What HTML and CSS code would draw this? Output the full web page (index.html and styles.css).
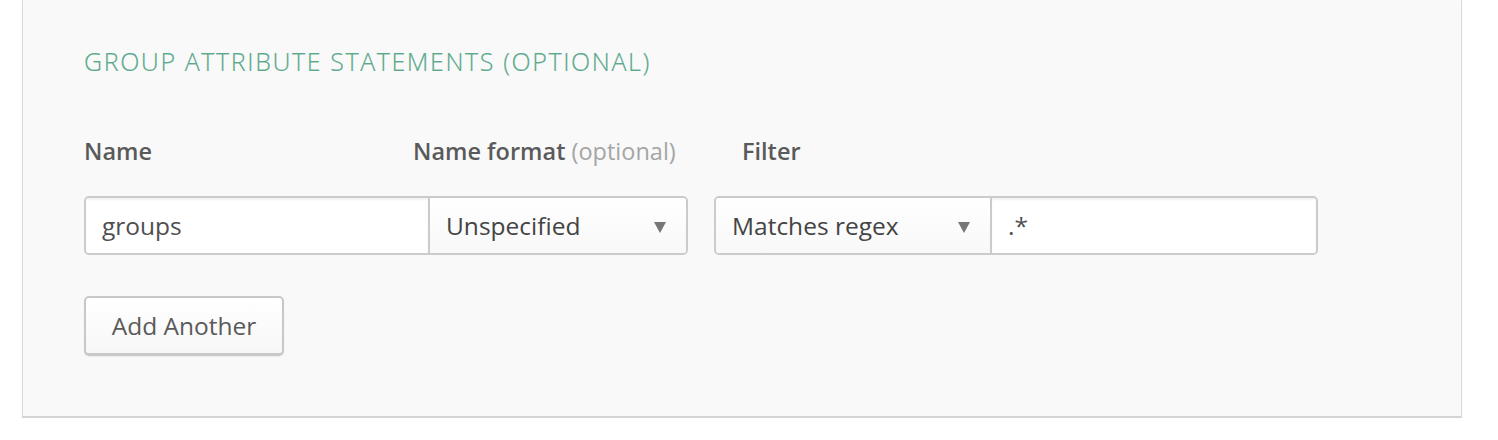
FILE: index.html
```html
<!DOCTYPE html>
<html>
<head>
<meta charset="utf-8">
<link rel="stylesheet" href="styles.css">
</head>
<body>
<div class="panel">
  <h2 class="title">GROUP ATTRIBUTE STATEMENTS (OPTIONAL)</h2>
  <div class="labels">
    <div class="lbl lbl-name">Name</div>
    <div class="lbl lbl-format">Name format <span class="opt">(optional)</span></div>
    <div class="lbl lbl-filter">Filter</div>
  </div>
  <div class="fields">
    <div class="group">
      <div class="input name-input">groups</div>
      <div class="select format-select">Unspecified<span class="caret"></span></div>
    </div>
    <div class="group">
      <div class="select filter-select">Matches regex<span class="caret"></span></div>
      <div class="input regex-input">.*</div>
    </div>
  </div>
  <button class="btn">Add Another</button>
</div>
</body>
</html>
```
FILE: styles.css
```css
html, body {
  margin: 0;
  padding: 0;
  background: #ffffff;
}
body {
  font-family: "Open Sans", Lato, "Liberation Sans", sans-serif;
  color: #5c5c5c;
}
.panel {
  margin-left: 22px;
  width: 1440px;
  height: 418px;
  box-sizing: border-box;
  background: #f9f9f9;
  border-left: 1px solid #dcdcdc;
  border-right: 1px solid #dcdcdc;
  border-bottom: 2px solid #d4d4d4;
  box-shadow: 0 2px 3px rgba(0,0,0,0.04);
  padding: 44px 0 0 61px;
}
.title {
  margin: 0;
  font-size: 25px;
  font-weight: 300;
  line-height: 34px;
  color: #5aa98b;
  letter-spacing: 1.6px;
  -webkit-text-stroke: 0.2px #5aa98b;
}
.labels {
  display: flex;
  margin-top: 58px;
  height: 30px;
  align-items: center;
}
.lbl {
  font-size: 23.5px;
  font-weight: 600;
  color: #5a5a5a;
  white-space: nowrap;
}
.lbl-name { width: 329px; }
.lbl-format { width: 329px; }
.opt {
  font-weight: 400;
  color: #a5a5a5;
}
.fields {
  display: flex;
  gap: 26px;
  margin-top: 30px;
}
.group {
  display: flex;
  border: 2px solid #cbcbcb;
  border-radius: 5px;
  height: 59px;
  box-sizing: border-box;
  overflow: hidden;
}
.input, .select {
  box-sizing: border-box;
  height: 100%;
  display: flex;
  align-items: center;
  font-size: 24.5px;
  color: #4f4f4f;
}
.input {
  background: #ffffff;
  box-shadow: inset 0 2px 2px rgba(0,0,0,0.05);
  padding-left: 16px;
}
.select {
  background: linear-gradient(#ffffff, #f8f8f8);
  padding-left: 16px;
  position: relative;
  color: #444;
}
.name-input { width: 344px; border-right: 2px solid #cbcbcb; }
.format-select { width: 256px; }
.filter-select { width: 276px; border-right: 2px solid #cbcbcb; }
.regex-input { width: 324px; }
.caret {
  position: absolute;
  right: 20px;
  top: 24px;
  width: 0;
  height: 0;
  border-left: 6px solid transparent;
  border-right: 6px solid transparent;
  border-top: 11px solid #777777;
}
.btn {
  display: block;
  margin-top: 41px;
  width: 200px;
  height: 60px;
  box-sizing: border-box;
  border: 2px solid #c8c8c8;
  border-bottom-width: 3px;
  border-radius: 5px;
  background: linear-gradient(#ffffff, #f7f7f7);
  font-family: inherit;
  font-size: 24.5px;
  color: #5a5a5a;
  padding: 0;
  box-shadow: 0 1px 2px rgba(0,0,0,0.06);
}
```
